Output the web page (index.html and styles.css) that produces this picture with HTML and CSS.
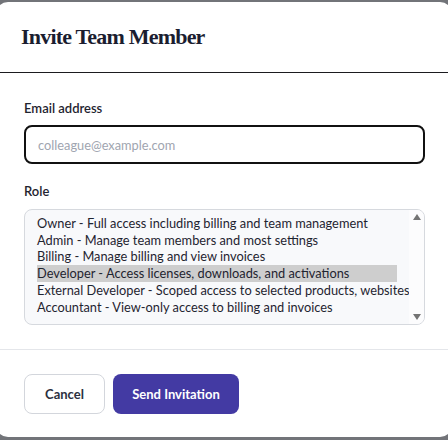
FILE: index.html
```html
<!DOCTYPE html>
<html lang="en">
<head>
<meta charset="utf-8">
<title>Invite Team Member</title>
<link rel="stylesheet" href="styles.css">
</head>
<body>
<div class="dialog">
  <header class="dialog-header">
    <h1 class="dialog-title">Invite Team Member</h1>
  </header>
  <section class="dialog-body">
    <label class="field-label" for="email">Email address</label>
    <input class="text-input" id="email" type="email" placeholder="colleague@example.com">
    <div class="field-label role-label">Role</div>
    <div class="listbox" role="listbox">
      <div class="listbox-options">
        <div class="option">Owner - Full access including billing and team management</div>
        <div class="option">Admin - Manage team members and most settings</div>
        <div class="option">Billing - Manage billing and view invoices</div>
        <div class="option selected">Developer - Access licenses, downloads, and activations</div>
        <div class="option">External Developer - Scoped access to selected products, websites, and licenses</div>
        <div class="option">Accountant - View-only access to billing and invoices</div>
      </div>
      <div class="scrollbar" aria-hidden="true">
        <span class="arrow arrow-up"></span>
        <span class="arrow arrow-down"></span>
      </div>
    </div>
  </section>
  <footer class="dialog-footer">
    <button class="btn btn-secondary" type="button">Cancel</button>
    <button class="btn btn-primary" type="button">Send Invitation</button>
  </footer>
</div>
</body>
</html>
```

FILE: styles.css
```css
html, body {
  margin: 0;
  padding: 0;
}
body {
  background: #727479;
  height: 440px;
  overflow: hidden;
  font-family: "Lato", "Noto Sans", sans-serif;
  color: #1f2430;
}
.dialog {
  margin: 2px 0 0 -4px;
  width: 456px;
  height: 435px;
  background: #ffffff;
  border-radius: 12px;
  display: flex;
  flex-direction: column;
  box-sizing: border-box;
}
.dialog-header {
  height: 71px;
  box-sizing: border-box;
  border-bottom: 1px solid #1b1b1f;
  padding: 0 25px;
  display: flex;
  align-items: center;
}
.dialog-title {
  margin: 0;
  font-family: "Liberation Serif", "DejaVu Serif", serif;
  font-weight: 700;
  font-size: 22px;
  color: #1b1d30;
  letter-spacing: -0.8px;
}
.dialog-body {
  padding: 26px 27px 24px 28px;
  display: flex;
  flex-direction: column;
  border-bottom: 1px solid #e4e6ea;
}
.field-label {
  font-size: 13px;
  line-height: 18px;
  font-weight: 600;
  color: #1f2430;
  margin-bottom: 8px;
}
.role-label {
  margin-top: 18px;
  margin-bottom: 9px;
}
.text-input {
  height: 39px;
  box-sizing: border-box;
  border: 2px solid #111111;
  border-radius: 8px;
  padding: 0 12px;
  font-family: "Lato", "Noto Sans", sans-serif;
  font-size: 12.8px;
  color: #1f2430;
  outline: none;
}
.text-input::placeholder {
  color: #a0a5b0;
}
.listbox {
  height: 116px;
  box-sizing: border-box;
  border: 1px solid #d6d9de;
  border-radius: 8px;
  background: #f8f9fb;
  display: flex;
  overflow: hidden;
}
.listbox-options {
  flex: 1;
  min-width: 0;
  padding: 5px 12px 9px 12px;
  overflow: hidden;
  font-size: 12.8px;
  color: #1f2430;
}
.option {
  line-height: 16.7px;
  white-space: nowrap;
}
.option.selected {
  background: #cecece;
}
.scrollbar {
  width: 15px;
  flex: none;
  background: #fcfcfd;
  display: flex;
  flex-direction: column;
  justify-content: space-between;
  align-items: center;
  padding: 4px 0;
  box-sizing: border-box;
}
.arrow {
  width: 0;
  height: 0;
  border-left: 4.5px solid transparent;
  border-right: 4.5px solid transparent;
}
.arrow-up {
  border-bottom: 6px solid #747474;
}
.arrow-down {
  border-top: 6px solid #747474;
}
.dialog-footer {
  padding: 24px 28px 22px;
  display: flex;
  gap: 8px;
}
.btn {
  height: 40px;
  box-sizing: border-box;
  border-radius: 8px;
  font-family: "Lato", "Noto Sans", sans-serif;
  font-size: 13px;
  font-weight: 700;
  padding: 0;
}
.btn-secondary {
  width: 81px;
  background: #ffffff;
  border: 1px solid #d3d6dc;
  color: #2b3040;
}
.btn-primary {
  width: 126px;
  background: #433aa3;
  border: none;
  color: #ffffff;
}
```
